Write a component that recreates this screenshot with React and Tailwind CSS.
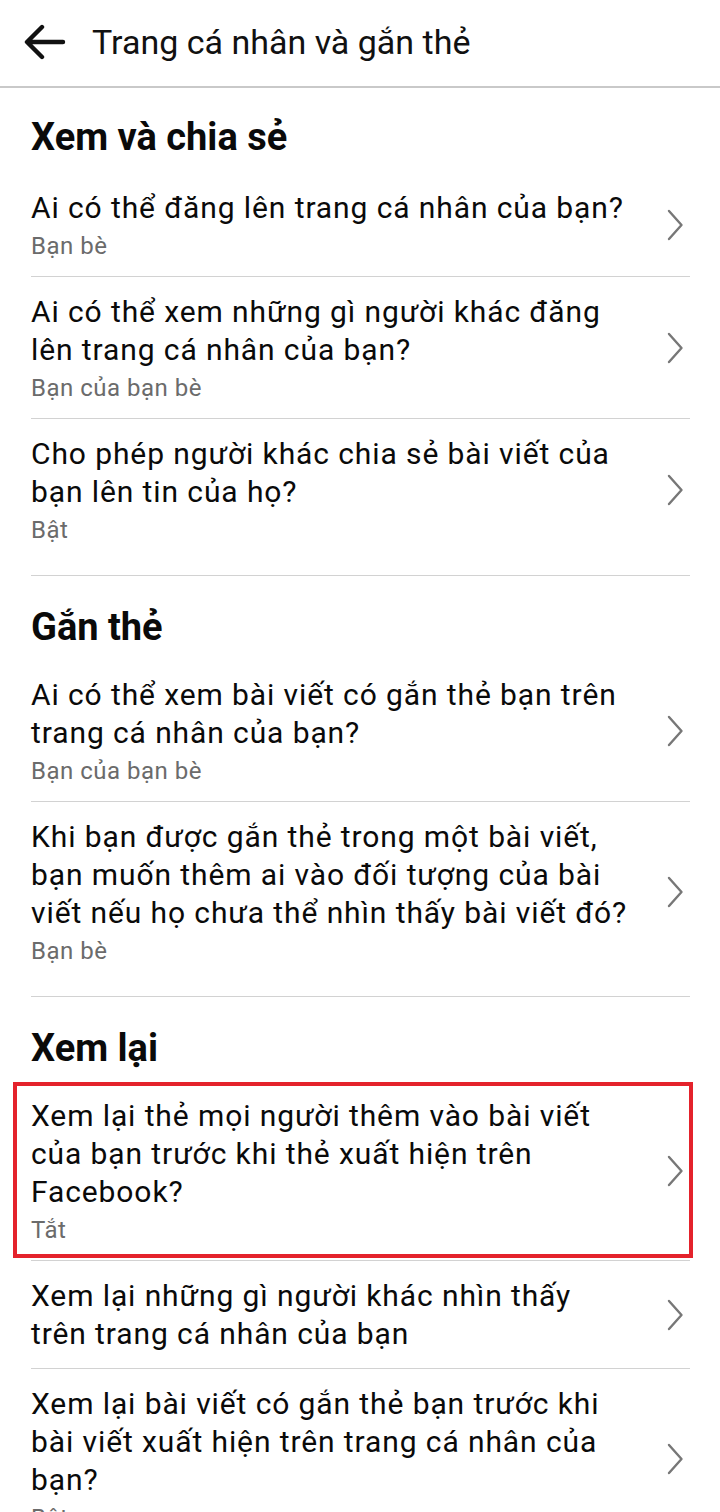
import React from 'react';

const sections = [
    {
        title: 'Xem và chia sẻ',
        first: true,
        rows: [
            { text: 'Ai có thể đăng lên trang cá nhân của bạn?', sub: 'Bạn bè' },
            { text: 'Ai có thể xem những gì người khác đăng\nlên trang cá nhân của bạn?', sub: 'Bạn của bạn bè' },
            { text: 'Cho phép người khác chia sẻ bài viết của\nbạn lên tin của họ?', sub: 'Bật' },
        ],
    },
    {
        title: 'Gắn thẻ',
        rows: [
            { text: 'Ai có thể xem bài viết có gắn thẻ bạn trên\ntrang cá nhân của bạn?', sub: 'Bạn của bạn bè' },
            { text: 'Khi bạn được gắn thẻ trong một bài viết,\nbạn muốn thêm ai vào đối tượng của bài\nviết nếu họ chưa thể nhìn thấy bài viết đó?', sub: 'Bạn bè' },
        ],
    },
    {
        title: 'Xem lại',
        rows: [
            { text: 'Xem lại thẻ mọi người thêm vào bài viết\ncủa bạn trước khi thẻ xuất hiện trên\nFacebook?', sub: 'Tắt', marked: true },
            { text: 'Xem lại những gì người khác nhìn thấy\ntrên trang cá nhân của bạn' },
            { text: 'Xem lại bài viết có gắn thẻ bạn trước khi\nbài viết xuất hiện trên trang cá nhân của\nbạn?', sub: 'Bật' },
        ],
    },
];

function Chevron() {
    return (
        <svg width="18" height="34" viewBox="0 0 18 34" fill="none" className="mr-[6px]">
            <path d="M3 3 L15.5 17 L3 31" stroke="#777777" strokeWidth="2.4" strokeLinecap="round" strokeLinejoin="round" />
        </svg>
    );
}

function Row({ row, last }) {
    return (
        <div className={`relative flex items-center border-b border-[#d2d2d2] pt-4 ${last ? 'pb-[30px]' : 'pb-[15px]'}`}>
            <div className="w-[612px]">
                <div className="whitespace-pre-line text-[30px] leading-[38px] tracking-[0.9px] text-[#0a0a0a]">{row.text}</div>
                {row.sub && <div className="mt-1 text-[24px] leading-[30px] tracking-[0.5px] text-[#6b6b6b]">{row.sub}</div>}
            </div>
            <div className="flex flex-1 justify-end">
                <Chevron />
            </div>
            {/* red highlight frame */}
            {row.marked && (
                <div className="absolute -left-[18px] -right-[3px] top-[1px] bottom-[2px] border-4 border-[#e4222b]" />
            )}
        </div>
    );
}

export default function App() {
    return (
        <main className="min-h-screen w-[720px] overflow-hidden bg-white" style={{ fontFamily: 'Roboto, "Noto Sans", sans-serif' }}>
            {/* Top bar */}
            <header className="flex h-[88px] items-center border-b-2 border-[#c9c9c9] pb-[2px]">
                <svg width="42" height="36" viewBox="0 0 42 36" fill="none" className="ml-[24px]">
                    <path d="M39 18 H4 M18 3 L3 18 L18 33" stroke="#111" strokeWidth="4.4" strokeLinecap="round" strokeLinejoin="round" />
                </svg>
                <h1 className="ml-[26px] text-[34px] leading-[40px] text-[#111]">Trang cá nhân và gắn thẻ</h1>
            </header>

            <div className="pl-[31px] pr-[30px]">
                {sections.map((section) => (
                    <section key={section.title} className={section.first ? 'pt-[28px]' : 'pt-[30px]'}>
                        <h2 className={`text-[38px] font-bold leading-[42px] text-[#0a0a0a] ${section.first ? 'mb-[15px]' : 'mb-[12px]'}`}>
                            {section.title}
                        </h2>
                        {section.rows.map((row, i) => (
                            <Row key={row.text} row={row} last={i === section.rows.length - 1} />
                        ))}
                    </section>
                ))}
            </div>
        </main>
    );
}
